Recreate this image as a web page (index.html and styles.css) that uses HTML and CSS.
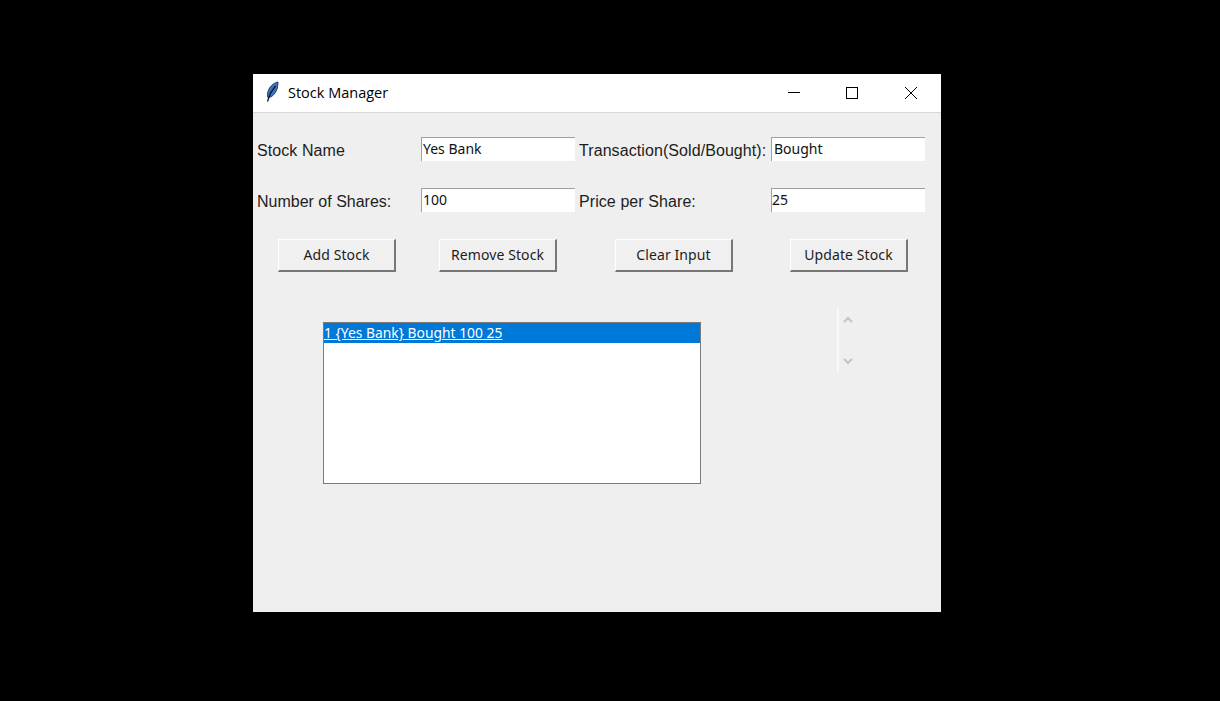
FILE: index.html
```html
<!DOCTYPE html>
<html lang="en">
<head>
<meta charset="utf-8">
<title>Stock Manager</title>
<link rel="stylesheet" href="styles.css">
</head>
<body>
<div class="window">
  <header class="titlebar">
    <svg class="feather" width="16" height="22" viewBox="0 0 16 22"><path d="M14 1C9.500 2 5.500 5.500 4 10.500c-.6 2-.7 4-.1 6C8 16.500 11.500 12.500 13 8c.7-2.300 1-4.700 1-7Z" fill="#3a76c8" stroke="#1b2a48" stroke-width=".9"/><path d="M11.500 5 6.500 12 3.500 20.500" fill="none" stroke="#15151f" stroke-width="1.300"/></svg>
    <span class="title">Stock Manager</span>
    <div class="controls">
      <svg class="ctl" width="58" height="38" viewBox="0 0 58 38"><path d="M23 18.500H35" stroke="#000" fill="none"/></svg>
      <svg class="ctl" width="58" height="38" viewBox="0 0 58 38"><rect x="23.500" y="13.500" width="11" height="11" stroke="#000" fill="none"/></svg>
      <svg class="ctl ctl-close" width="58" height="38" viewBox="0 0 58 38"><path d="M23 13l12 12M35 13 23 25" stroke="#000" fill="none"/></svg>
    </div>
  </header>
  <main class="content">
    <div class="form">
      <label class="label">Stock Name</label>
      <div class="entry">Yes Bank</div>
      <label class="label label-right">Transaction(Sold/Bought):</label>
      <div class="entry entry-b">Bought</div>
      <label class="label label-tight">Number of Shares:</label>
      <div class="entry">100</div>
      <label class="label label-right">Price per Share:</label>
      <div class="entry entry-n">25</div>
    </div>
    <div class="buttons">
      <button class="btn">Add Stock</button>
      <button class="btn">Remove Stock</button>
      <button class="btn">Clear Input</button>
      <button class="btn">Update Stock</button>
    </div>
    <div class="list-row">
      <div class="listbox">
        <div class="item">1 {Yes Bank} Bought 100 25</div>
      </div>
      <div class="scrollbar">
        <svg width="12" height="8" viewBox="0 0 12 8"><path d="M2 6l4-4 4 4" fill="none" stroke="#c4c4c4" stroke-width="2"/></svg>
        <svg width="12" height="8" viewBox="0 0 12 8"><path d="M2 2l4 4 4-4" fill="none" stroke="#c4c4c4" stroke-width="2"/></svg>
      </div>
    </div>
  </main>
</div>
</body>
</html>
```
FILE: styles.css
```css
* { box-sizing: border-box; }
html, body { margin: 0; height: 100%; }
body { background: #000; padding: 74px 0 0 253px; overflow: hidden; }
.window { width: 688px; height: 538px; background: #efefef; display: flex; flex-direction: column; }
.titlebar { height: 39px; background: #fff; border-bottom: 1px solid #d8d8d8; display: flex; align-items: center; padding-left: 11px; flex: none; }
.feather { flex: none; margin-top: -2px; }
.title { font: 14.500px "Open Sans", sans-serif; color: #000; margin: -2px 0 0 8px; }
.controls { margin-left: auto; display: flex; height: 38px; margin-right: 1px; }
.ctl { display: block; }
.ctl-close { margin-left: 1px; }
.content { padding: 24px 0 0 4px; flex: 1; }
.form { display: grid; grid-template-columns: 164px 154px 196px 154px; row-gap: 27px; }
.label { font: 16px "Liberation Sans", sans-serif; letter-spacing: .08px; color: #1d1d1d; display: flex; align-items: center; height: 24px; padding-top: 3px; }
.label-right { margin-left: 4px; }
.label-tight { letter-spacing: 0; }
.entry { height: 24px; background: #fff; border-top: 1px solid #a0a0a0; border-left: 1px solid #a0a0a0; font: 14px "Noto Sans", sans-serif; color: #111; padding-left: 1px; line-height: 22px; }
.entry-b { padding-left: 2px; }
.entry-n { padding-left: 0; }
.buttons { display: flex; margin: 27px 0 0 21px; }
.btn { flex: none; width: 118px; height: 33px; background: #f0f0f0; border: 0; border-top: 1px solid #fff; border-left: 1px solid #fff; border-right: 2px solid #777; border-bottom: 2px solid #777; font: 14px "Noto Sans", sans-serif; letter-spacing: .1px; color: #1d1d1d; padding: 0 0 2px; margin-right: 43px; }
.btn:nth-child(2) { margin-right: 58px; }
.btn:nth-child(3) { margin-right: 57px; }
.btn:nth-child(4) { margin-right: 0; }
.list-row { display: flex; margin: 36px 0 0 66px; }
.listbox { width: 378px; height: 162px; background: #fff; border: 1px solid #7a7a7a; margin-top: 14px; flex: none; }
.item { height: 20px; background: #0078d7; color: #fff; font: 13.850px "Noto Sans", sans-serif; line-height: 20px; text-decoration: underline; white-space: nowrap; }
.scrollbar { width: 19px; height: 64px; margin-left: 136px; border-left: 2px solid #f8f8f8; display: flex; flex-direction: column; justify-content: space-between; align-items: center; padding: 8px 0 7px; }
```
